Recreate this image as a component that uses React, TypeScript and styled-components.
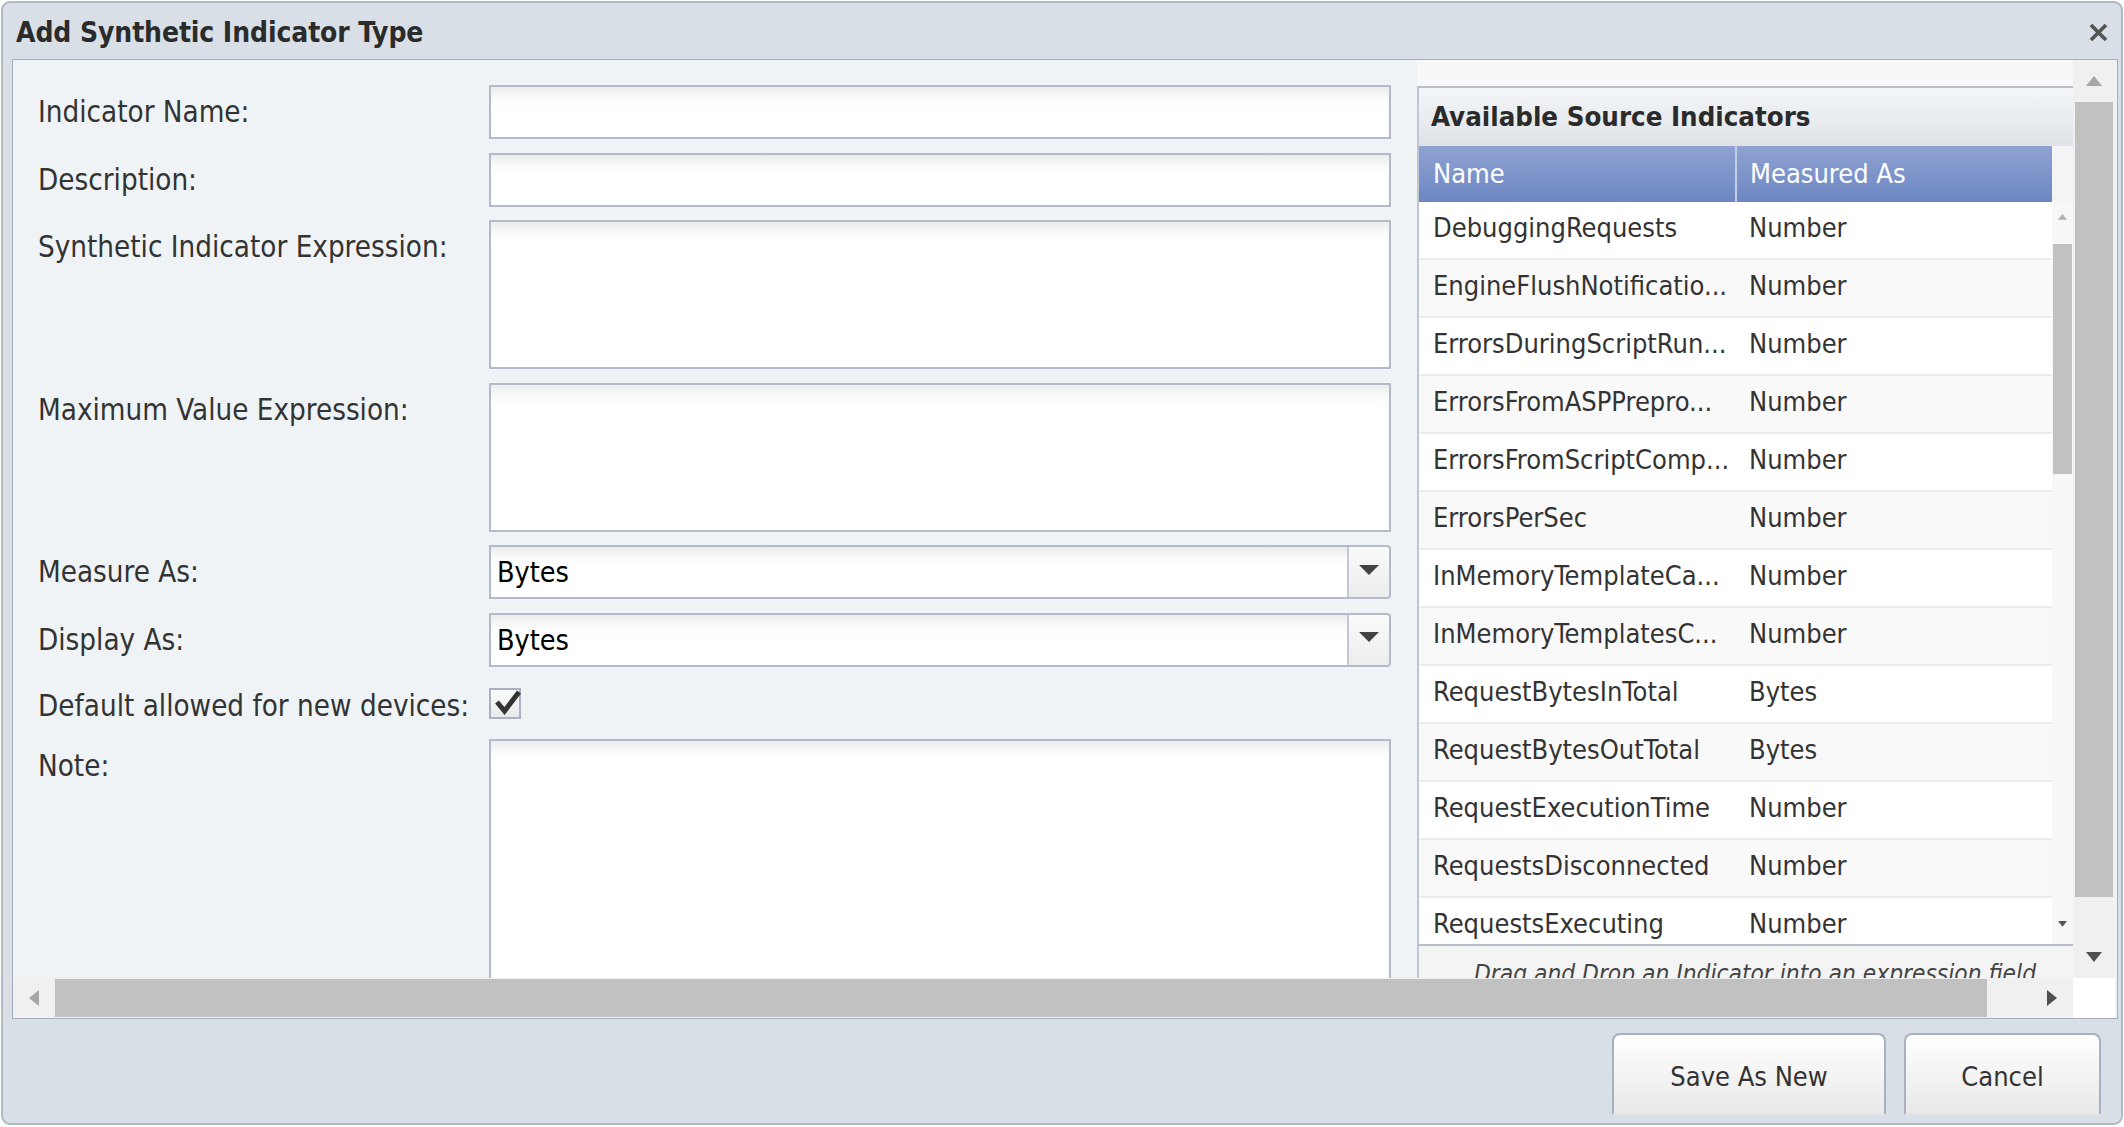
import React from 'react'
import styled, { createGlobalStyle } from 'styled-components'

const GlobalStyle = createGlobalStyle`
  html, body {
    margin: 0;
    padding: 0;
    background: #ffffff;
  }
  body {
    font-family: "DejaVu Sans Condensed", "DejaVu Sans", sans-serif;
    color: #333;
  }
  * { box-sizing: border-box; }
`

interface Indicator {
  name: string;
  measuredAs: string;
}

const indicators: Indicator[] = [
  { name: 'DebuggingRequests', measuredAs: 'Number' },
  { name: 'EngineFlushNotificatio...', measuredAs: 'Number' },
  { name: 'ErrorsDuringScriptRun...', measuredAs: 'Number' },
  { name: 'ErrorsFromASPPrepro...', measuredAs: 'Number' },
  { name: 'ErrorsFromScriptComp...', measuredAs: 'Number' },
  { name: 'ErrorsPerSec', measuredAs: 'Number' },
  { name: 'InMemoryTemplateCa...', measuredAs: 'Number' },
  { name: 'InMemoryTemplatesC...', measuredAs: 'Number' },
  { name: 'RequestBytesInTotal', measuredAs: 'Bytes' },
  { name: 'RequestBytesOutTotal', measuredAs: 'Bytes' },
  { name: 'RequestExecutionTime', measuredAs: 'Number' },
  { name: 'RequestsDisconnected', measuredAs: 'Number' },
  { name: 'RequestsExecuting', measuredAs: 'Number' },
  { name: 'RequestsFailed', measuredAs: 'Number' },
]

function Arrow({ dir, color, size = 16 }: { dir: 'up' | 'down' | 'left' | 'right'; color: string; size?: number }) {
  const pts = {
    up: '0,10 8,0 16,10',
    down: '0,0 16,0 8,10',
    left: '10,0 10,16 0,8',
    right: '0,0 10,8 0,16',
  }[dir]
  const vertical = dir === 'up' || dir === 'down'
  const w = vertical ? size : (size * 10) / 16
  const h = vertical ? (size * 10) / 16 : size
  return (
    <svg width={w} height={h} viewBox={vertical ? '0 0 16 10' : '0 0 10 16'}>
      <polygon points={pts} fill={color} />
    </svg>
  )
}

function DropArrow() {
  return (
    <svg width="20" height="10" viewBox="0 0 20 10">
      <polygon points="0,0 20,0 10,10" fill="#424242" />
    </svg>
  )
}

function App() {
  return (
    <Page>
      <GlobalStyle />
      <Window>
        <TitleBar>
          <Title>Add Synthetic Indicator Type</Title>
          <Close>
            <svg width="19" height="19" viewBox="0 0 19 19">
              <path d="M2 2 L17 17 M17 2 L2 17" stroke="#555" strokeWidth="3.8" />
            </svg>
          </Close>
        </TitleBar>

        <Panel>
          <Viewport>
            <Form>
              <Label>Indicator Name:</Label>
              <TextInput />
              <Label>Description:</Label>
              <TextInput />
              <Label>Synthetic Indicator Expression:</Label>
              <TextArea />
              <Label>Maximum Value Expression:</Label>
              <TextArea />
              <Label>Measure As:</Label>
              <Select>
                <SelectValue>Bytes</SelectValue>
                <SelectButton><DropArrow /></SelectButton>
              </Select>
              <Label>Display As:</Label>
              <Select>
                <SelectValue>Bytes</SelectValue>
                <SelectButton><DropArrow /></SelectButton>
              </Select>
              <CheckLabel>Default allowed for new devices:</CheckLabel>
              <CheckCell>
                <CheckBox>
                  <svg width="28" height="27" viewBox="0 0 28 27" overflow="visible">
                    <path d="M6 12 L13.5 21 L28 2" stroke="#333" strokeWidth="5" fill="none" />
                  </svg>
                </CheckBox>
              </CheckCell>
              <Label>Note:</Label>
              <TextArea $tall />
            </Form>

            <Side>
              <SideStrip />
              <SideHeading>Available Source Indicators</SideHeading>
              <GridHead>
                <HeadCell>Name</HeadCell>
                <HeadCell $divider>Measured As</HeadCell>
                <HeadSpacer />
              </GridHead>
              <GridBody>
                <Rows>
                  {indicators.map((ind, i) => (
                    <Row key={ind.name} $alt={i % 2 === 1}>
                      <Cell>{ind.name}</Cell>
                      <Cell>{ind.measuredAs}</Cell>
                    </Row>
                  ))}
                </Rows>
                <MiniScroll>
                  <MiniArrow $h={30}><Arrow dir="up" color="#b0b0b0" size={9} /></MiniArrow>
                  <MiniTrack>
                    <MiniThumb />
                  </MiniTrack>
                  <MiniArrow $h={40}><Arrow dir="down" color="#555" size={9} /></MiniArrow>
                </MiniScroll>
              </GridBody>
              <DragHint>Drag and Drop an Indicator into an expression field</DragHint>
            </Side>
          </Viewport>

          <VScroll>
            <ScrollArrow><Arrow dir="up" color="#a6a6a6" /></ScrollArrow>
            <VTrack>
              <VThumb />
            </VTrack>
            <ScrollArrow><Arrow dir="down" color="#505050" /></ScrollArrow>
          </VScroll>

          <HScroll>
            <HArrow><Arrow dir="left" color="#a6a6a6" /></HArrow>
            <HThumb />
            <HArrow $wide><Arrow dir="right" color="#505050" /></HArrow>
          </HScroll>
          <Corner />
        </Panel>

        <Footer>
          <Button $width={274}>Save As New</Button>
          <Button $width={197}>Cancel</Button>
        </Footer>
      </Window>
    </Page>
  )
}

export default App

const Page = styled.div`
  width: 2124px;
  height: 1127px;
  padding: 1px 1px 2px 1px;
`;

const Window = styled.div`
  height: 100%;
  display: flex;
  flex-direction: column;
  background: #d8dfe7;
  border: 2px solid #b1b8c4;
  border-radius: 9px;
  overflow: hidden;
`;

const TitleBar = styled.div`
  height: 56px;
  flex: none;
  display: flex;
  align-items: center;
  justify-content: space-between;
  padding: 3px 12px 0 13px;
`;

const Title = styled.div`
  font-size: 28px;
  font-weight: bold;
  color: #2b2b2b;
  letter-spacing: -0.1px;
`;

const Close = styled.div`
  width: 21px;
  height: 21px;
  display: flex;
  align-items: center;
  justify-content: center;
`;

const Panel = styled.div`
  height: 960px;
  flex: none;
  margin: 0 3px 0 9px;
  border: 1px solid #a6aebc;
  background: #eff3f6;
  display: grid;
  grid-template-columns: 2060px 42px;
  grid-template-rows: 918px 40px;
`;

const Viewport = styled.div`
  overflow: hidden;
  display: flex;
  align-items: flex-start;
`;

const Form = styled.div`
  width: 1404px;
  flex: none;
  display: grid;
  grid-template-columns: 451px 902px;
  row-gap: 13.5px;
  padding: 25px 0 0 25px;
`;

const Label = styled.div`
  font-size: 29.3px;
  line-height: 54px;
  color: #333;
  white-space: nowrap;
  align-self: start;
`;

const CheckLabel = styled(Label)`
  line-height: 38px;
  padding-top: 7px;
`;

const fieldBox = `
  border: 2px solid #b5bacb;
  background: linear-gradient(#ececec 0px, #fbfbfb 12px, #ffffff 20px);
`;

const TextInput = styled.div`
  height: 54px;
  ${fieldBox}
`;

const TextArea = styled.div<{ $tall?: boolean }>`
  height: ${p => (p.$tall ? '300px' : '149px')};
  ${fieldBox}
`;

const Select = styled.div`
  height: 54px;
  display: flex;
  ${fieldBox}
  border-top-right-radius: 4px;
  border-bottom-right-radius: 4px;
`;

const SelectValue = styled.div`
  flex: 1;
  font-size: 28.5px;
  line-height: 52px;
  padding-left: 6px;
  color: #000;
`;

const SelectButton = styled.div`
  width: 42px;
  border-left: 2px solid #c3c7d4;
  background: linear-gradient(#fafafa, #ededed);
  display: flex;
  align-items: center;
  justify-content: center;
  padding-bottom: 5px;
  border-top-right-radius: 3px;
  border-bottom-right-radius: 3px;
`;

const CheckCell = styled.div`
  height: 44px;
  display: flex;
  align-items: flex-start;
  padding-top: 8px;
`;

const CheckBox = styled.div`
  width: 32px;
  height: 31px;
  border: 2px solid #abb0c2;
  background: linear-gradient(#fbfbfb, #e8e9ec);
`;

const Side = styled.div`
  width: 656px;
  flex: none;
  display: flex;
  flex-direction: column;
  background: #f6f6f6;
`;

const SideStrip = styled.div`
  height: 26px;
  background: #f8f8f8;
`;

const SideHeading = styled.div`
  height: 60px;
  border-top: 2px solid #b7bdc9;
  border-left: 2px solid #c0c6d1;
  background: linear-gradient(#f4f6f8, #dfe3e9);
  font-size: 27.4px;
  font-weight: bold;
  color: #2b2b2b;
  line-height: 58px;
  padding-left: 12px;
`;

const GridHead = styled.div`
  height: 56px;
  display: flex;
  border-left: 2px solid #c0c6d1;
`;

const HeadCell = styled.div<{ $divider?: boolean }>`
  width: ${p => (p.$divider ? '317px' : '316px')};
  background: linear-gradient(#8fa3d2, #6c87c2);
  color: #fff;
  font-size: 27px;
  line-height: 56px;
  padding-left: ${p => (p.$divider ? '13px' : '14px')};
  border-left: ${p => (p.$divider ? '2px solid #c4cde3' : 'none')};
`;

const HeadSpacer = styled.div`
  flex: 1;
  background: #f4f4f4;
`;

const GridBody = styled.div`
  height: 744px;
  display: flex;
  border-left: 2px solid #c0c6d1;
  border-bottom: 2px solid #b7bdc9;
  background: #fff;
`;

const Rows = styled.div`
  width: 633px;
  overflow: hidden;
`;

const Row = styled.div<{ $alt: boolean }>`
  height: 58px;
  display: grid;
  grid-template-columns: 316px 317px;
  background: ${p => (p.$alt ? '#f9f9f9' : '#ffffff')};
  border-bottom: 2px solid #ececec;
`;

const Cell = styled.div`
  font-size: 27px;
  line-height: 51px;
  padding-left: 14px;
  color: #333;
  white-space: nowrap;
  overflow: hidden;
`;

const MiniScroll = styled.div`
  flex: 1;
  display: flex;
  flex-direction: column;
  background: #f7f7f7;
`;

const MiniArrow = styled.div<{ $h: number }>`
  height: ${p => p.$h}px;
  display: flex;
  align-items: center;
  justify-content: center;
`;

const MiniTrack = styled.div`
  flex: 1;
  padding: 12px 1px 0;
`;

const MiniThumb = styled.div`
  height: 230px;
  background: #c1c1c1;
`;

const DragHint = styled.div`
  border-left: 2px solid #c0c6d1;
  padding: 12px 0 20px 18px;
  text-align: center;
  font-size: 24.3px;
  font-style: italic;
  line-height: 32px;
  color: #444;
  background: #f4f4f4;
`;

const VScroll = styled.div`
  display: flex;
  flex-direction: column;
  background: #f0f0f0;
`;

const ScrollArrow = styled.div`
  height: 42px;
  display: flex;
  align-items: center;
  justify-content: center;
`;

const VTrack = styled.div`
  flex: 1;
  padding: 0 2px;
`;

const VThumb = styled.div`
  height: 795px;
  background: #c1c1c1;
`;

const HScroll = styled.div`
  display: flex;
  align-items: stretch;
  background: #f0f0f0;
  padding: 1px 0;
`;

const HArrow = styled.div<{ $wide?: boolean }>`
  width: ${p => (p.$wide ? '86px' : '42px')};
  display: flex;
  align-items: center;
  justify-content: center;
  padding-left: ${p => (p.$wide ? '44px' : '0')};
`;

const HThumb = styled.div`
  width: 1932px;
  background: #c1c1c1;
`;

const Corner = styled.div`
  background: #ffffff;
`;

const Footer = styled.div`
  flex: 1;
  display: flex;
  justify-content: flex-end;
  align-items: flex-start;
  gap: 18px;
  padding: 14px 20px 0 0;
`;

const Button = styled.div<{ $width: number }>`
  width: ${p => p.$width}px;
  height: 82px;
  border: 2px solid #a9b0bf;
  border-bottom-color: #e4e4e4;
  border-radius: 8px 8px 0 0;
  background: linear-gradient(#ffffff, #e9e9e9);
  display: flex;
  align-items: center;
  justify-content: center;
  font-size: 27px;
  color: #333;
  padding-top: 4px;
`;
